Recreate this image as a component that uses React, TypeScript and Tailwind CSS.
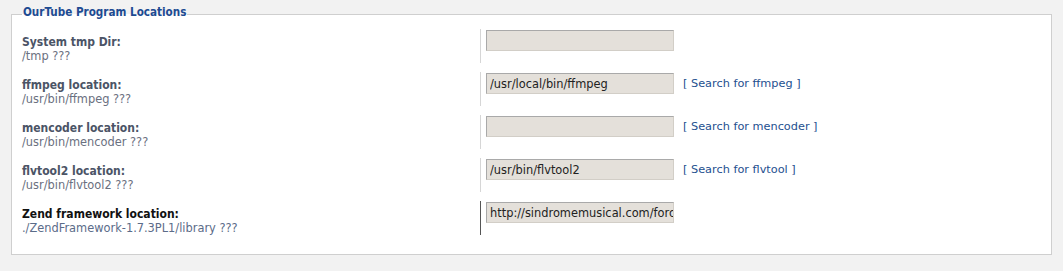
const rows = [
  { label: "System tmp Dir:", hint: "/tmp ???", value: "", link: "" },
  {
    label: "ffmpeg location:",
    hint: "/usr/bin/ffmpeg ???",
    value: "/usr/local/bin/ffmpeg",
    link: "[ Search for ffmpeg ]",
  },
  {
    label: "mencoder location:",
    hint: "/usr/bin/mencoder ???",
    value: "",
    link: "[ Search for mencoder ]",
  },
  {
    label: "flvtool2 location:",
    hint: "/usr/bin/flvtool2 ???",
    value: "/usr/bin/flvtool2",
    link: "[ Search for flvtool ]",
  },
];

function Row({
  label,
  hint,
  value,
  link,
  active,
}: {
  label: string;
  hint: string;
  value: string;
  link: string;
  active?: boolean;
}) {
  return (
    <div className="mb-[9px] flex h-[34px]">
      <div className="w-[458px] pt-[6px]">
        <div
          className={
            "font-['DejaVu_Sans_Condensed','DejaVu_Sans',sans-serif] text-[12px] leading-[14px] font-bold " +
            (active ? "text-[#111]" : "text-[#4b5466]")
          }
        >
          {label}
        </div>
        <div
          className={
            "text-[11.4px] leading-[14px] " +
            (active ? "text-[#5b6c89]" : "text-[#6a7080]")
          }
        >
          {hint}
        </div>
      </div>
      <div
        className={
          "flex h-[34px] items-start border-l pl-[5px] " +
          (active ? "border-[#555]" : "border-[#d6d6d6]")
        }
      >
        <div className="mt-[1px] flex h-[21px] items-center">
          <input
            readOnly
            value={value}
            className="h-[21px] w-[188px] border border-t-[#a9a9a9] border-r-[#d2cec7] border-b-[#d2cec7] border-l-[#a9a9a9] bg-[#e4e0da] pl-[3px] text-[11.4px] text-[#222] outline-none"
          />
          {link && (
            <a className="ml-[9px] mt-[1px] cursor-pointer text-[11.3px] text-[#24508f]">
              {link}
            </a>
          )}
        </div>
      </div>
    </div>
  );
}

export default function App() {
  return (
    <div className="min-h-screen bg-[#f2f2f2] px-[11px] pt-[5px] pb-[15px] font-['DejaVu_Sans',sans-serif]">
      <fieldset className="border border-[#cfcfcf] bg-white pt-[6px] pb-[10px] pl-[10px]">
        <legend className="px-[1px] pb-[4px] font-['DejaVu_Sans_Condensed','DejaVu_Sans',sans-serif] text-[11.6px] leading-[14px] font-bold text-[#1d4b92]">
          OurTube Program Locations
        </legend>
        {rows.map((r) => (
          <Row key={r.label} {...r} />
        ))}
        <Row
          label="Zend framework location:"
          hint="./ZendFramework-1.7.3PL1/library ???"
          value="http://sindromemusical.com/foro/ourtube/ZendFramework"
          link=""
          active
        />
      </fieldset>
    </div>
  );
}
